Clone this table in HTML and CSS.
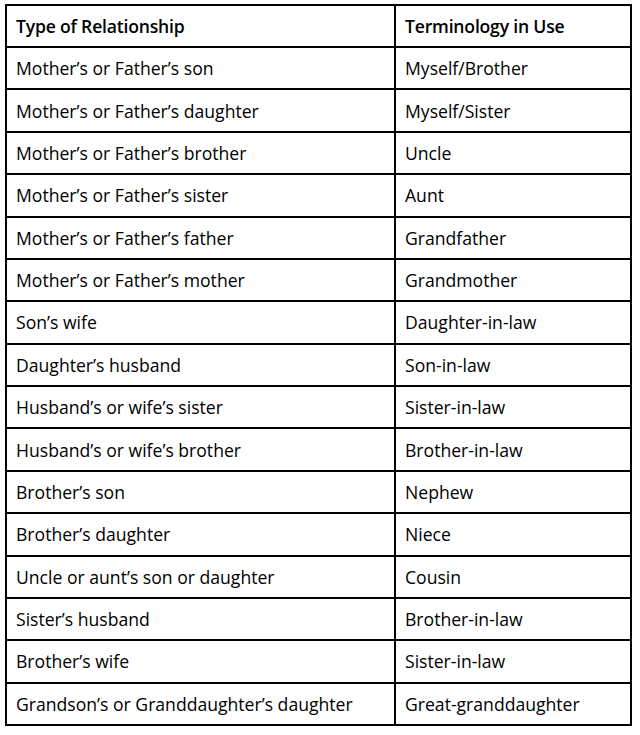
FILE: index.html
```html
<!DOCTYPE html>
<html>
<head>
<meta charset="utf-8">
<link rel="stylesheet" href="styles.css">
</head>
<body>
<table class="rel">
<tr class="head"><th class="c1">Type of Relationship</th><th class="c2">Terminology in Use</th></tr>
<tr><td>Mother’s or Father’s son</td><td>Myself/Brother</td></tr>
<tr><td>Mother’s or Father’s daughter</td><td>Myself/Sister</td></tr>
<tr><td>Mother’s or Father’s brother</td><td>Uncle</td></tr>
<tr><td>Mother’s or Father’s sister</td><td>Aunt</td></tr>
<tr><td>Mother’s or Father’s father</td><td>Grandfather</td></tr>
<tr><td>Mother’s or Father’s mother</td><td>Grandmother</td></tr>
<tr><td>Son’s wife</td><td>Daughter-in-law</td></tr>
<tr><td>Daughter’s husband</td><td>Son-in-law</td></tr>
<tr><td>Husband’s or wife’s sister</td><td>Sister-in-law</td></tr>
<tr><td>Husband’s or wife’s brother</td><td>Brother-in-law</td></tr>
<tr><td>Brother’s son</td><td>Nephew</td></tr>
<tr><td>Brother’s daughter</td><td>Niece</td></tr>
<tr><td>Uncle or aunt’s son or daughter</td><td>Cousin</td></tr>
<tr><td>Sister’s husband</td><td>Brother-in-law</td></tr>
<tr><td>Brother’s wife</td><td>Sister-in-law</td></tr>
<tr><td>Grandson’s or Granddaughter’s daughter</td><td>Great-granddaughter</td></tr>
</table>
</body>
</html>
```
FILE: styles.css
```css
html, body {
  margin: 0;
  padding: 0;
  background: #fff;
}
body {
  padding: 4px 0 0 5px;
  font-family: "Open Sans", "Lato", "Liberation Sans", sans-serif;
  font-size: 17.6px;
  color: #000;
}
.rel {
  border-collapse: separate;
  border-spacing: 0;
  border-top: 2px solid #000;
  border-left: 2px solid #000;
  table-layout: fixed;
  width: 627px;
}
.rel th, .rel td {
  border-right: 2px solid #000;
  border-bottom: 2px solid #000;
  padding: 0 0 0 9px;
  text-align: left;
  vertical-align: middle;
  box-sizing: border-box;
  white-space: nowrap;
}
.rel th {
  font-weight: 600;
  letter-spacing: -0.2px;
  height: 42px;
}
.rel td {
  height: 42.375px;
}
.c1 { width: 389px; }
.c2 { width: 236px; }
```
